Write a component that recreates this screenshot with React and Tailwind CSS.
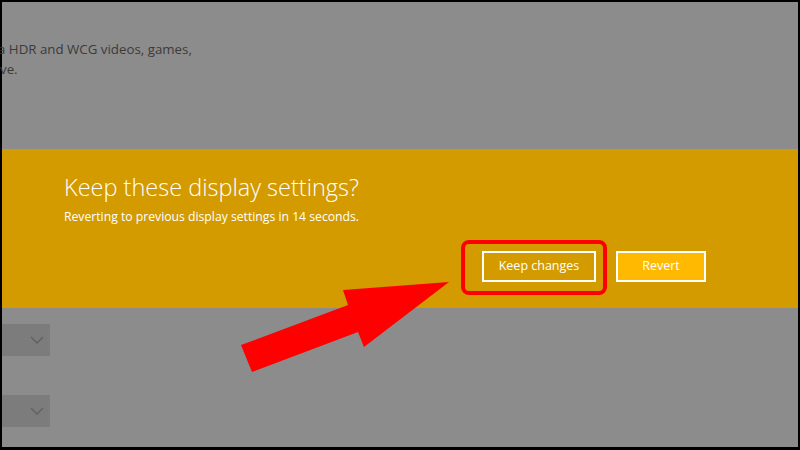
export default function App() {
  return (
    <div className="w-[800px] h-[450px] bg-black pt-[2px] pl-[2px] pr-[2px] pb-[3px] overflow-hidden" style={{ fontFamily: '"Open Sans", "Noto Sans", sans-serif' }}>
      <div className="relative w-full h-full bg-[#8c8c8c] flex flex-col">
        {/* background settings text */}
        <div className="h-[147px] pt-[37px] text-[13.3px] leading-[20px] text-[#3b3b3b]">
          <p className="-ml-[4px]">a HDR and WCG videos, games,</p>
          <p className="-ml-[2px]">ve.</p>
        </div>

        {/* dialog band */}
        <div className="h-[159px] bg-[#d39b00] pl-[62px] pt-[23px] text-white">
          <h1 className="text-[23.5px] font-light leading-[30px]">Keep these display settings?</h1>
          <p className="mt-[6px] text-[12.2px] leading-[18px]">Reverting to previous display settings in 14 seconds.</p>
          <div className="mt-[25px] flex gap-[20px] pl-[418px]">
            <div className="relative">
              <div className="absolute left-[-21px] top-[-11px] w-[146px] h-[55px] border-[4px] border-[#ff0000] rounded-[8px]" />
              <button className="w-[114px] h-[31px] border-2 border-white text-[12.5px] text-white">Keep changes</button>
            </div>
            <button className="w-[90px] h-[31px] border-2 border-white bg-[#ffb900] text-[12.5px] text-white">Revert</button>
          </div>
        </div>

        {/* dropdowns */}
        <div className="flex flex-col gap-[39px] pt-[16px]">
          {[0, 1].map((i) => (
            <div key={i} className="w-[48px] h-[32px] bg-[#7c7c7c] flex items-center justify-end pr-[6px]">
              <svg width="14" height="8" viewBox="0 0 14 8" fill="none" stroke="#606060" strokeWidth="1.3">
                <path d="M1 1l6 6 6-6" />
              </svg>
            </div>
          ))}
        </div>

        {/* annotation arrow */}
        <svg className="absolute left-0 top-0 pointer-events-none" width="796" height="445" viewBox="2 2 796 445">
          <polygon points="241,345 348,305 343,290 449,282 364,347 358,332 252,372" fill="#ff0000" />
        </svg>
      </div>
    </div>
  );
}
